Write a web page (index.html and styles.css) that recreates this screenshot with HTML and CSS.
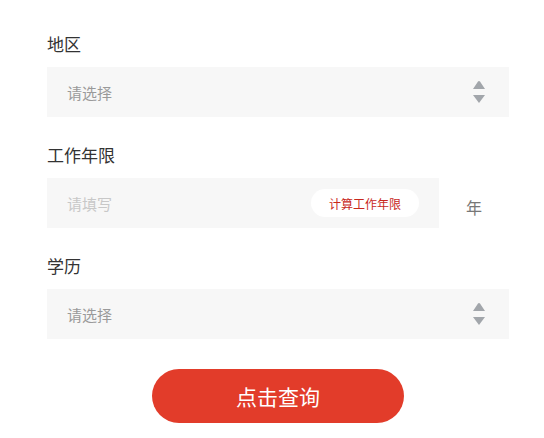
FILE: index.html
```html
<!DOCTYPE html>
<html lang="zh">
<head>
<meta charset="utf-8">
<link rel="stylesheet" href="styles.css">
</head>
<body>
<div class="form">
  <div class="field">
    <div class="label">地区</div>
    <div class="box select">
      <span class="ph">请选择</span>
      <svg class="arrows" width="14" height="24" viewBox="0 0 14 24"><path d="M7 1 Q7.6 1 8 1.6 L13 9 H1 L6 1.6 Q6.4 1 7 1Z" fill="#a2a6ab"/><path d="M1 15 H13 L7 23Z" fill="#a2a6ab"/></svg>
    </div>
  </div>
  <div class="field">
    <div class="label">工作年限</div>
    <div class="row">
      <div class="box input">
        <span class="ph light">请填写</span>
        <span class="calc">计算工作年限</span>
      </div>
      <span class="unit">年</span>
    </div>
  </div>
  <div class="field">
    <div class="label">学历</div>
    <div class="box select">
      <span class="ph">请选择</span>
      <svg class="arrows" width="14" height="24" viewBox="0 0 14 24"><path d="M7 1 Q7.6 1 8 1.6 L13 9 H1 L6 1.6 Q6.4 1 7 1Z" fill="#a2a6ab"/><path d="M1 15 H13 L7 23Z" fill="#a2a6ab"/></svg>
    </div>
  </div>
  <div class="actions">
    <button class="submit">点击查询</button>
  </div>
</div>
</body>
</html>
```
FILE: styles.css
```css
* { box-sizing: border-box; }
body {
  margin: 0;
  background: #fff;
  font-family: "Noto Sans CJK SC", "Noto Sans", sans-serif;
}
.form {
  padding: 32px 35px 0 47px;
  width: 544px;
}
.field {
  margin-bottom: 26px;
}
.label {
  font-size: 17px;
  line-height: 24px;
  color: #333;
  margin-bottom: 11px;
}
.box {
  height: 50px;
  background: #f7f7f7;
  display: flex;
  align-items: center;
  padding: 0 20px;
}
.select {
  justify-content: space-between;
  padding-right: 23px;
}
.ph {
  font-size: 15px;
  color: #9a9a9a;
}
.ph.light {
  color: #c8c8c8;
}
.arrows { display: block; }
.row {
  display: flex;
  align-items: center;
}
.input {
  width: 392px;
  justify-content: space-between;
  padding-right: 20px;
}
.calc {
  background: #fff;
  height: 28px;
  width: 108px;
  border-radius: 14px;
  display: flex;
  align-items: center;
  justify-content: center;
  font-size: 12px;
  color: #c8281c;
}
.unit {
  margin-left: 27px;
  margin-top: 8px;
  font-size: 16px;
  color: #777;
}
.actions {
  display: flex;
  justify-content: center;
  margin-top: 30px;
}
.submit {
  width: 252px;
  height: 54px;
  border: none;
  border-radius: 27px;
  background: #e23c2a;
  color: #fff;
  font-family: inherit;
  font-size: 21px;
  cursor: pointer;
}
```
